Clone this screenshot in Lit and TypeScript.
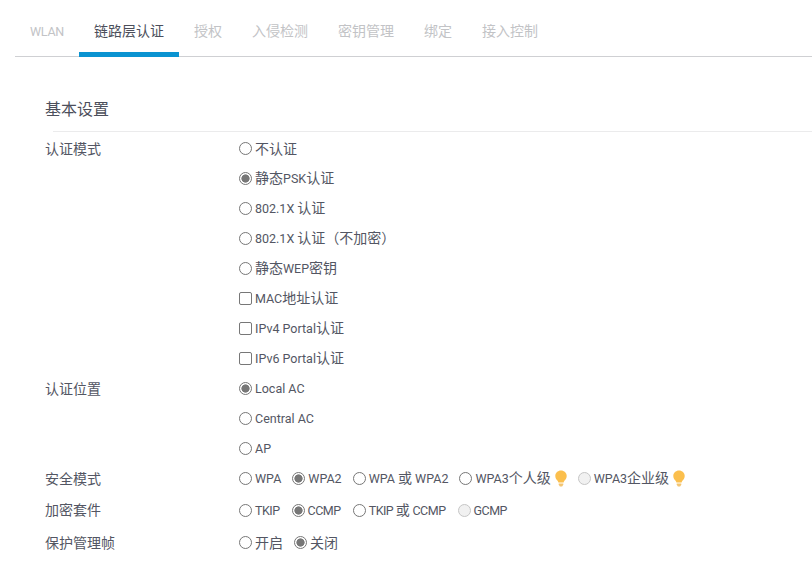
import { LitElement, html, css } from "lit";
import { customElement } from "lit/decorators.js";

type Opt = { t: string; kind?: "radio" | "check"; on?: boolean; off?: boolean; tip?: boolean };

const bulb = html`<svg class="bulb" viewBox="0 0 12 17" width="12" height="17" aria-hidden="true">
  <path d="M6 .4C2.8.4.3 2.8.3 5.9c0 2.2 1.1 3.4 2.1 4.7.5.7.9 1.3 1 2h5.2c.1-.7.5-1.3 1-2 1-1.3 2.1-2.5 2.1-4.7C11.7 2.8 9.2.4 6 .4z" fill="#fbbf4d"/>
  <path d="M3.7 13.4h4.6v1.3L7.1 16.6H4.9l-1.2-1.9z" fill="#f3c573"/>
</svg>`;

/* Latin runs are set smaller than the CJK runs, as in the reference's mixed font. */
const mixed = (text: string) =>
  text
    .split(/([\u3000-\u9fff\uff00-\uffef]+)/)
    .filter(Boolean)
    .map((part) => (/^[\u3000-\u9fff\uff00-\uffef]/.test(part) ? html`<span>${part}</span>` : html`<span class="latin">${part}</span>`));

@customElement("app-root")
export class AppRoot extends LitElement {
  static styles = css`
    :host {
      display: block;
      width: 812px;
      height: 575px;
      overflow: hidden;
      background: #fff;
      font-family: "Noto Sans CJK SC", sans-serif;
      font-size: 14px;
      color: #535663;
    }
    .latin {
      font-family: Roboto, sans-serif;
      font-size: 12.5px;
      white-space: pre;
    }
    .tabs {
      display: flex;
      height: 56px;
      margin-left: 15px;
      border-bottom: 1px solid #cfd0d3;
      box-sizing: content-box;
    }
    .tab {
      padding: 21px 15px 0;
      height: 35px;
      line-height: 18px;
      color: #c2c3c6;
      box-sizing: content-box;
    }
    .tab .latin {
      letter-spacing: -0.25px;
    }
    .tab.active {
      color: #4c4f5b;
      height: 31px;
      border-bottom: 5px solid #0a93d1;
    }
    h2 {
      margin: 0;
      padding: 40px 0 0 45px;
      height: 34px;
      box-sizing: content-box;
      font-size: 16px;
      line-height: 22px;
      font-weight: 400;
      color: #4c4f5b;
    }
    .rule {
      height: 1px;
      margin-left: 53px;
      background: #ebebec;
    }
    .form {
      display: grid;
      grid-template-columns: 194px 1fr;
      padding: 1px 0 0 45px;
    }
    .label {
      line-height: 30px;
    }
    .label.last {
      line-height: 32px;
    }
    .stack {
      display: flex;
      flex-direction: column;
    }
    .row {
      display: flex;
      align-items: center;
      height: 30px;
    }
    .row.sec {
      height: 31px;
    }
    .row.tall {
      height: 32px;
    }
    .row.caps .latin {
      letter-spacing: -0.5px;
    }
    .row.caps .opt {
      margin-right: 12px;
    }
    .opt {
      display: flex;
      align-items: center;
      margin-right: 11px;
      white-space: nowrap;
    }
    .text {
      line-height: 20px;
      margin-top: -1px;
    }
    input {
      appearance: none;
      -webkit-appearance: none;
      flex: none;
      width: 13px;
      height: 13px;
      margin: 0 3px 0 0;
      box-sizing: border-box;
      border: 1px solid #777;
      background: #fff;
      border-radius: 50%;
    }
    input.check {
      border-radius: 2px;
    }
    input.sel {
      background: radial-gradient(circle, #777 0 3.8px, #fff 4.4px);
    }
    input.dis {
      border-color: #c6c6c6;
      background: #f1f1f1;
    }
    .bulb {
      margin-left: 4px;
    }
  `;

  private opt(o: Opt) {
    const cls = [o.kind === "check" ? "check" : "", o.on ? "sel" : "", o.off ? "dis" : ""].join(" ");
    return html`<label class="opt"
      ><input class=${cls} type=${o.kind === "check" ? "checkbox" : "radio"} ?disabled=${o.off} /><span class="text">${mixed(o.t)}</span>${o.tip ? bulb : ""}</label
    >`;
  }

  render() {
    const tabs = ["WLAN", "链路层认证", "授权", "入侵检测", "密钥管理", "绑定", "接入控制"];
    const mode: Opt[] = [
      { t: "不认证" },
      { t: "静态PSK认证", on: true },
      { t: "802.1X 认证" },
      { t: "802.1X 认证（不加密）" },
      { t: "静态WEP密钥" },
      { t: "MAC地址认证", kind: "check" },
      { t: "IPv4 Portal认证", kind: "check" },
      { t: "IPv6 Portal认证", kind: "check" },
    ];
    const place: Opt[] = [{ t: "Local AC", on: true }, { t: "Central AC" }, { t: "AP" }];
    const security: Opt[] = [
      { t: "WPA" },
      { t: "WPA2", on: true },
      { t: "WPA 或 WPA2" },
      { t: "WPA3个人级", tip: true },
      { t: "WPA3企业级", off: true, tip: true },
    ];
    const cipher: Opt[] = [{ t: "TKIP" }, { t: "CCMP", on: true }, { t: "TKIP 或 CCMP" }, { t: "GCMP", off: true }];
    const pmf: Opt[] = [{ t: "开启" }, { t: "关闭", on: true }];
    return html`
      <nav class="tabs">
        ${tabs.map((t, i) => html`<div class="tab ${i === 1 ? "active" : ""}">${mixed(t)}</div>`)}
      </nav>
      <h2>基本设置</h2>
      <div class="rule"></div>
      <div class="form">
        <div class="label">认证模式</div>
        <div class="stack">${mode.map((o) => html`<div class="row">${this.opt(o)}</div>`)}</div>
        <div class="label">认证位置</div>
        <div class="stack">${place.map((o) => html`<div class="row">${this.opt(o)}</div>`)}</div>
        <div class="label">安全模式</div>
        <div class="row sec">${security.map((o) => this.opt(o))}</div>
        <div class="label">加密套件</div>
        <div class="row tall caps">${cipher.map((o) => this.opt(o))}</div>
        <div class="label last">保护管理帧</div>
        <div class="row tall">${pmf.map((o) => this.opt(o))}</div>
      </div>
    `;
  }
}
